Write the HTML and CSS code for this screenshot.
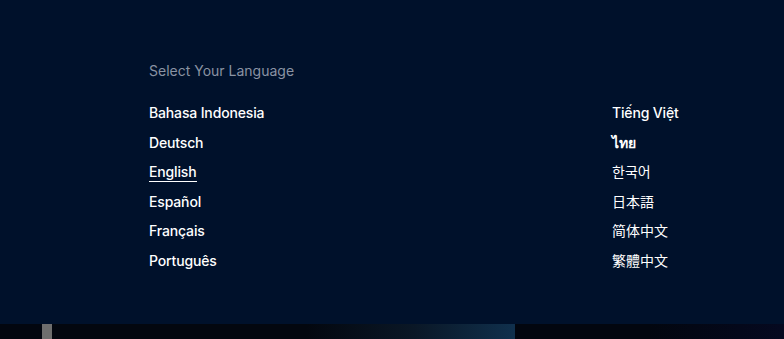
FILE: index.html
```html
<!DOCTYPE html>
<html lang="en">
<head>
    <meta charset="UTF-8">
    <meta name="viewport" content="width=device-width, initial-scale=1.0">
    <title>Select Your Language</title>
    <link rel="stylesheet" href="styles.css">
</head>
<body>
    <!-- Language Picker -->
    <section class="language-panel">
        <h2 class="language-title">Select Your Language</h2>
        <div class="language-columns">
            <ul class="language-list">
                <li><a href="#">Bahasa Indonesia</a></li>
                <li><a href="#">Deutsch</a></li>
                <li><a href="#" class="active">English</a></li>
                <li><a href="#">Español</a></li>
                <li><a href="#">Français</a></li>
                <li><a href="#">Português</a></li>
            </ul>
            <ul class="language-list">
                <li><a href="#">Tiếng Việt</a></li>
                <li lang="th"><a href="#">ไทย</a></li>
                <li lang="ko"><a href="#">한국어</a></li>
                <li lang="ja"><a href="#">日本語</a></li>
                <li lang="zh-CN"><a href="#">简体中文</a></li>
                <li lang="zh-TW"><a href="#">繁體中文</a></li>
            </ul>
        </div>
    </section>

    <!-- Page content peeking below -->
    <div class="preview-strip">
        <div class="preview-bar"></div>
        <div class="preview-card"></div>
        <div class="preview-rest"></div>
    </div>
</body>
</html>
```

FILE: styles.css
```css
body {
    font-family: Inter, "Noto Sans", "Noto Sans CJK SC", sans-serif;
    background-color: #02060f;
    margin: 0;
    padding: 0;
}

.language-panel {
    background-color: #00112b;
    height: 324px;
    box-sizing: border-box;
    padding: 61px 0 0 149px;
}

.language-title {
    margin: 0 0 22px;
    font-size: 14px;
    font-weight: 400;
    line-height: 20px;
    color: #8a93a3;
}

.language-columns {
    display: grid;
    grid-template-columns: 463px 1fr;
}

.language-list {
    list-style: none;
    margin: 0;
    padding: 0;
    display: flex;
    flex-direction: column;
    gap: 9.6px;
}

.language-list li {
    font-size: 14px;
    font-weight: 500;
    letter-spacing: -0.15px;
    line-height: 20px;
    height: 20px;
}

.language-list li[lang="th"] {
    font-weight: 700;
}

.language-list li[lang="ko"],
.language-list li[lang="ja"],
.language-list li[lang="zh-CN"],
.language-list li[lang="zh-TW"] {
    font-weight: 400;
    letter-spacing: 0;
    line-height: 18px;
}

.language-list li[lang="ko"] {
    font-family: "Noto Sans CJK KR", sans-serif;
}

.language-list li[lang="ja"] {
    font-family: "Noto Sans CJK JP", sans-serif;
}

.language-list li[lang="zh-CN"] {
    font-family: "Noto Sans CJK SC", sans-serif;
}

.language-list li[lang="zh-TW"] {
    font-family: "Noto Sans CJK TC", sans-serif;
}

.language-list a {
    color: #fff;
    text-decoration: none;
}

.language-list a.active {
    display: inline-block;
    line-height: 19px;
    border-bottom: 1px solid #fff;
}

.preview-strip {
    display: flex;
    height: 15px;
    padding-left: 42px;
}

.preview-bar {
    width: 10px;
    background-color: #6e6e6e;
}

.preview-card {
    width: 463px;
    background: linear-gradient(to right, #03070f 0%, #03070f 55%, #0a1726 78%, #10304d 100%);
}

.preview-rest {
    flex: 1;
    background: linear-gradient(to right, #02060f 0%, #02060f 50%, #050920 100%);
}
```
